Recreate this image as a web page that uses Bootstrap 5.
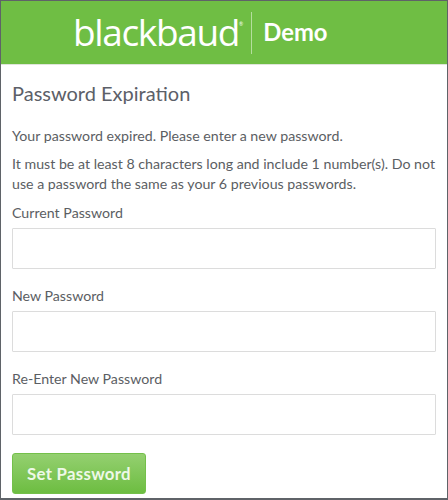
<!DOCTYPE html>
<html lang="en">
<head>
<meta charset="utf-8">
<title>Password Expiration</title>
<link href="https://cdn.jsdelivr.net/npm/bootstrap@5.3.0/dist/css/bootstrap.min.css" rel="stylesheet">
<style>
html, body { height: 100%; }
body { font-family: Lato, "Open Sans", sans-serif; color: #5b5e63; background: #fff; overflow: hidden; }
.frame { height: 500px; border: 1px solid #5f6368; border-bottom-width: 2px; }
.brand-bar { height: 64px; background: #6fbe44; color: #fff; border-bottom: 1px solid #dfe5da; padding-left: 72px; }
.brand-name { font-family: "Open Sans", sans-serif; font-size: 37px; font-weight: 400; letter-spacing: -1.35px; line-height: 1; margin-top: -2px; }
.brand-reg { font-size: 5px; align-self: flex-start; margin-top: 20px; }
.brand-rule { width: 1px; height: 42px; background: #b5de9e; margin: 0 11px 0 8px; }
.brand-tag { font-size: 23.8px; font-weight: 700; }
.form-pane { padding: 0 11px; }
.page-title { font-size: 20px; font-weight: 400; color: #5c6068; margin: 17px 0 22px; line-height: 22px; }
.copy { font-size: 14.2px; line-height: 19.4px; margin-bottom: 9px; }
.copy-last { margin-bottom: 10px; }
.field-label { font-size: 14.2px; line-height: 19px; margin-bottom: 6px; display: block; }
.field-box { height: 41px; border: 1px solid #dcdcdc; border-radius: 1px; }
.field-gap { margin-bottom: 17px; }
.submit-btn { width: 134px; height: 41px; margin-top: 18px; border: 1px solid #74c04a; border-radius: 3px; color: #eef8e8; font-size: 16.8px; font-weight: 700; letter-spacing: .3px; background: linear-gradient(#94d070, #6dbd41); padding: 0; }
</style>
</head>
<body>
<div class="frame">
  <div class="brand-bar d-flex align-items-center">
    <span class="brand-name">blackbaud</span><span class="brand-reg">®</span>
    <span class="brand-rule"></span>
    <span class="brand-tag">Demo</span>
  </div>
  <div class="form-pane">
    <h1 class="page-title">Password Expiration</h1>
    <p class="copy">Your password expired. Please enter a new password.</p>
    <p class="copy copy-last">It must be at least 8 characters long and include 1 number(s). Do not use a password the same as your 6 previous passwords.</p>
    <form>
      <div class="field-gap">
        <label class="field-label" for="a">Current Password</label>
        <input id="a" type="password" class="form-control field-box">
      </div>
      <div class="field-gap">
        <label class="field-label" for="b">New Password</label>
        <input id="b" type="password" class="form-control field-box">
      </div>
      <div>
        <label class="field-label" for="c">Re-Enter New Password</label>
        <input id="c" type="password" class="form-control field-box">
      </div>
      <button type="button" class="btn submit-btn">Set Password</button>
    </form>
  </div>
</div>
<script src="https://cdn.jsdelivr.net/npm/bootstrap@5.3.0/dist/js/bootstrap.bundle.min.js"></script>
</body>
</html>
